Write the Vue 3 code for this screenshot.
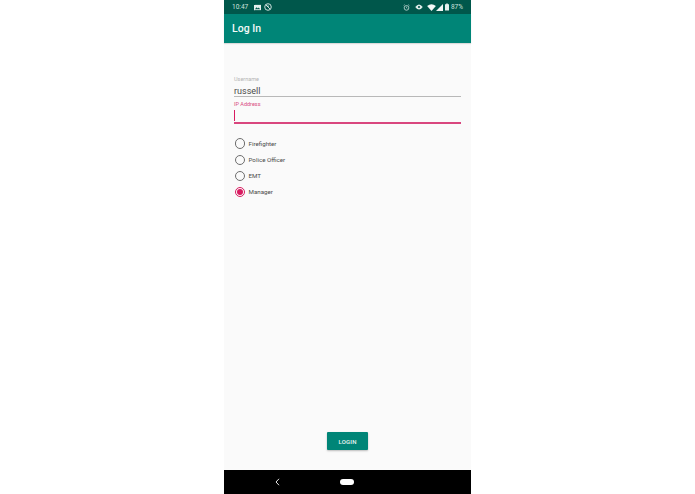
<script setup>
const roles = [
  { name: 'Firefighter', checked: false },
  { name: 'Police Officer', checked: false },
  { name: 'EMT', checked: false },
  { name: 'Manager', checked: true }
]
</script>

<template>
  <div class="stage">
    <div class="phone">
      <div class="status">
        <div class="status-left">
          <span class="time">10:47</span>
          <svg class="ic" width="7" height="7" viewBox="0 0 8 8"><path fill="#e6f0ee" d="M0 1h8v6H0z"/><path fill="#00574b" d="M1 6l2-2.400 1.400 1.500L5.400 4 7 6z"/></svg>
          <svg class="ic" width="8" height="8" viewBox="0 0 9 9"><circle cx="4.500" cy="4.500" r="3.700" fill="none" stroke="#e6f0ee" stroke-width="1"/><path d="M2.200 2.200l4.600 4.600" stroke="#e6f0ee" stroke-width="1"/><path d="M3.200 3h2.400v1H3.200z" fill="#e6f0ee"/></svg>
        </div>
        <div class="status-right">
          <svg width="7" height="7" viewBox="0 0 9 9"><circle cx="4.500" cy="5" r="3" fill="none" stroke="#cfe2de" stroke-width="1"/><path d="M4.500 3.400V5l1 .7M.8 1.900L2.200.8M8.200 1.900L6.800.8" fill="none" stroke="#cfe2de" stroke-width=".8"/></svg>
          <svg class="gap-eye" width="8" height="6" viewBox="0 0 10 8"><path d="M0 4q2.500-3.400 5-3.400T10 4Q7.500 7.400 5 7.400T0 4z" fill="#dcebe8"/><circle cx="5" cy="4" r="1.400" fill="#00574b"/></svg>
          <svg class="gap-wifi" width="9" height="7" viewBox="0 0 10 8"><path d="M0 2.200Q5-1.800 10 2.200L5 8z" fill="#f4f8f7"/></svg>
          <svg width="7" height="7" viewBox="0 0 8 8"><path d="M8 0v8H0z" fill="#f4f8f7"/></svg>
          <svg class="gap-batt" width="4" height="8" viewBox="0 0 5 9"><path d="M1.500 0h2v1H5v8H0V1h1.500z" fill="#e6f0ee"/></svg>
          <span class="pct">87%</span>
        </div>
      </div>
      <div class="appbar">Log In</div>
      <main class="content">
        <div class="field username">
          <label class="hint">Username</label>
          <div class="value">russell</div>
        </div>
        <div class="field ip">
          <label class="hint focus">IP Address</label>
          <div class="value"><span class="caret"></span></div>
        </div>
        <div class="roles">
          <div v-for="r in roles" :key="r.name" class="role">
            <span class="radio" :class="{ on: r.checked }"></span>
            <span class="role-name">{{ r.name }}</span>
          </div>
        </div>
        <div class="spacer"></div>
        <div class="actions"><button class="login">LOGIN</button></div>
      </main>
      <nav class="navbar">
        <svg class="back" width="5" height="8" viewBox="0 0 5 8"><path d="M4 .8L1 4l3 3.200" fill="none" stroke="#e8e8e8" stroke-width="1"/></svg>
        <span class="home"></span>
      </nav>
    </div>
  </div>
</template>

<style>
html, body { margin: 0; background: #fff; }
</style>

<style scoped>
.stage { width: 695px; height: 494px; display: flex; justify-content: center; font-family: Roboto, "Liberation Sans", sans-serif; }
.phone { width: 247px; height: 494px; display: flex; flex-direction: column; background: #fafafa; }
.status { height: 14px; background: #00574b; display: flex; align-items: center; justify-content: space-between; padding: 0 8px; color: #cfe2de; font-size: 6.500px; }
.status-left, .status-right { display: flex; align-items: center; }
.time { margin-right: 6px; }
.status-left .ic + .ic { margin-left: 3px; }
.gap-eye { margin-left: 5px; }
.gap-wifi { margin-left: 4px; }
.gap-batt { margin-left: 2px; }
.pct { margin-left: 2px; }
.appbar { height: 29px; background: #008577; color: #f4faf9; font-size: 10.500px; font-weight: 500; padding-left: 8px; display: flex; align-items: center; box-shadow: 0 1px 1px rgba(0,0,0,.12); }
.content { flex: 1; display: flex; flex-direction: column; padding: 32px 10px 0; }
.field { display: flex; flex-direction: column; }
.hint { font-size: 5.500px; line-height: 8px; color: #b4b4b4; }
.hint.focus { color: #d94a80; }
.value { font-size: 9px; line-height: 12px; color: #4a4a4a; border-bottom: 1px solid #b8b8b8; padding-top: 2px; height: 11px; }
.ip { margin-top: 3px; }
.ip .value { padding-top: 1px; height: 13px; border-bottom: 2px solid #d9467e; }
.caret { display: block; width: 1px; height: 11px; margin-top: 1px; background: #d81b60; }
.roles { margin-top: 11.500px; display: flex; flex-direction: column; }
.role { height: 16.200px; display: flex; align-items: center; }
.radio { box-sizing: border-box; width: 10.500px; height: 10.500px; margin-left: .5px; border: 1.300px solid #6e6e6e; border-radius: 50%; display: block; position: relative; }
.radio.on { border-color: #d81b60; }
.radio.on::after { content: ""; position: absolute; inset: 1.300px; border-radius: 50%; background: #d81b60; }
.role-name { margin-left: 3.500px; font-size: 6.200px; color: #4a4a4a; }
.spacer { flex: 1; }
.actions { display: flex; justify-content: center; padding-bottom: 20px; }
.login { width: 41px; height: 18px; background: #008577; color: #eef7f5; border: 0; border-radius: 1px; font: 500 6px Roboto, sans-serif; letter-spacing: .2px; box-shadow: 0 1px 2px rgba(0,0,0,.25); padding: 0; }
.navbar { height: 24px; background: #000; display: flex; align-items: center; }
.back { margin-left: 51px; }
.home { width: 14px; height: 6px; border-radius: 3px; background: #fff; margin-left: 60px; }
</style>
